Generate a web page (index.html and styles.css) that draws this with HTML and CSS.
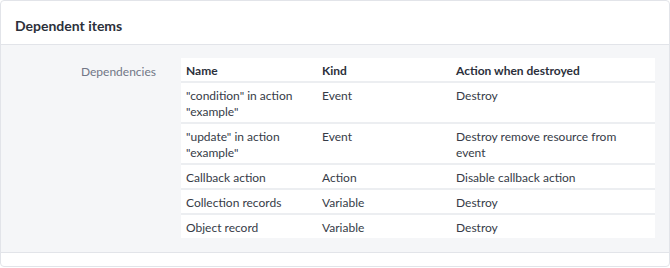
FILE: index.html
```html
<!DOCTYPE html>
<html>
<head>
<meta charset="utf-8">
<link rel="stylesheet" href="styles.css">
</head>
<body>
<div class="card">
  <div class="card-header">Dependent items</div>
  <div class="card-body">
    <div class="label">Dependencies</div>
    <table class="deps">
      <thead>
        <tr><th class="c-name">Name</th><th class="c-kind">Kind</th><th>Action when destroyed</th></tr>
      </thead>
      <tbody>
        <tr><td>"condition" in action "example"</td><td>Event</td><td>Destroy</td></tr>
        <tr><td>"update" in action "example"</td><td>Event</td><td>Destroy remove resource from event</td></tr>
        <tr><td>Callback action</td><td>Action</td><td>Disable callback action</td></tr>
        <tr><td>Collection records</td><td>Variable</td><td>Destroy</td></tr>
        <tr><td>Object record</td><td>Variable</td><td>Destroy</td></tr>
      </tbody>
    </table>
  </div>
  <div class="card-footer"></div>
</div>
</body>
</html>
```
FILE: styles.css
```css
html, body {
  margin: 0;
  padding: 0;
  background: #ffffff;
}
body {
  font-family: Lato, "Open Sans", sans-serif;
  color: #363b47;
}
.card {
  width: 670px;
  box-sizing: border-box;
  border: 1px solid #e2e4e9;
  border-radius: 4px;
  overflow: hidden;
}
.card-header {
  height: 43px;
  box-sizing: border-box;
  display: flex;
  align-items: center;
  padding: 4px 14px 0;
  font-size: 14px;
  font-weight: 700;
  color: #2c303b;
  border-bottom: 1px solid #e2e4e9;
  margin-top: 1px;
}
.card-body {
  background: #f5f6f8;
  display: grid;
  grid-template-columns: 180px 1fr;
  padding: 13px 13px 14px 0;
  border-bottom: 1px solid #e2e4e9;
}
.label {
  text-align: right;
  padding-right: 25px;
  padding-top: 6px;
  font-size: 12px;
  line-height: 16px;
  color: #717786;
}
.deps {
  width: 474px;
  border-collapse: collapse;
  background: #ffffff;
  font-size: 12px;
  line-height: 16px;
  table-layout: fixed;
}
.deps th, .deps td {
  text-align: left;
  vertical-align: top;
  padding: 5px 14px 2px 5px;
}
.deps th {
  font-weight: 700;
  color: #2c303b;
}
.c-name { width: 117px; }
.c-kind { width: 115px; }
.deps tr {
  border-bottom: 2px solid #eceef1;
}
.deps tbody tr:last-child {
  border-bottom: none;
}
.card-footer {
  height: 13px;
}
```
